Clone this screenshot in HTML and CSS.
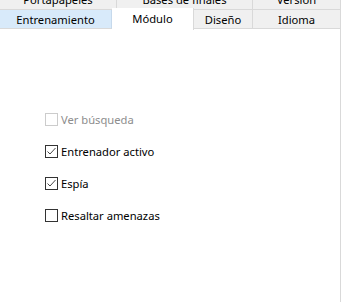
FILE: index.html
```html
<!DOCTYPE html>
<html lang="es">
<head>
  <meta charset="UTF-8">
  <title>Opciones</title>
  <link rel="stylesheet" href="styles.css">
</head>
<body>

  <div class="tab-row back-row">
    <div class="tab w-porta">Portapapeles</div>
    <div class="tab w-bases">Bases de finales</div>
    <div class="tab w-version">Versión</div>
  </div>

  <div class="tab-row front-row">
    <div class="tab w-entren hover">Entrenamiento</div>
    <div class="tab w-modulo selected">Módulo</div>
    <div class="tab w-diseno">Diseño</div>
    <div class="tab w-idioma">Idioma</div>
  </div>

  <div class="panel">
    <label class="option disabled">
      <span class="box"></span>
      <span>Ver búsqueda</span>
    </label>
    <label class="option">
      <span class="box">
        <svg width="11" height="11" viewBox="0 0 11 11"><path d="M1.5 5.5 L4 8 L9.5 2" fill="none" stroke="#333" stroke-width="0.9"/></svg>
      </span>
      <span>Entrenador activo</span>
    </label>
    <label class="option">
      <span class="box">
        <svg width="11" height="11" viewBox="0 0 11 11"><path d="M1.5 5.5 L4 8 L9.5 2" fill="none" stroke="#333" stroke-width="0.9"/></svg>
      </span>
      <span>Espía</span>
    </label>
    <label class="option">
      <span class="box"></span>
      <span>Resaltar amenazas</span>
    </label>
  </div>

</body>
</html>
```

FILE: styles.css
```css
body {
  margin: 0;
  background: #fff;
  font-family: "Noto Sans", sans-serif;
  font-size: 11.2px;
  color: #000;
  overflow: hidden;
}
.tab-row {
  display: flex;
  width: 341px;
}
.back-row {
  margin-top: -10px;
  height: 20px;
}
.front-row {
  height: 19px;
  position: relative;
}
.tab {
  box-sizing: border-box;
  background: #f0f0f0;
  border-right: 1px solid #d9d9d9;
  border-bottom: 1px solid #d9d9d9;
  text-align: center;
  line-height: 19px;
}
.back-row .tab {
  line-height: 19px;
}
.w-porta { width: 117px; }
.w-bases { width: 136px; }
.w-version { width: 88px; }
.w-entren { width: 112px; }
.w-modulo { width: 82px; }
.w-diseno { width: 59px; }
.w-idioma { width: 88px; }
.tab.hover {
  background: #d8eafa;
  border-right-color: #c6d9ec;
}
.tab.selected {
  background: #fff;
  border-bottom: none;
  margin-top: -2px;
  height: 22px;
  line-height: 21px;
  position: relative;
  z-index: 1;
}
.panel {
  box-sizing: border-box;
  width: 341px;
  height: 280px;
  border-right: 1px solid #d9d9d9;
  padding: 84px 0 0 45px;
}
.option {
  display: flex;
  align-items: center;
  gap: 3px;
  height: 13px;
  margin-bottom: 19px;
}
.box {
  box-sizing: border-box;
  width: 13px;
  height: 13px;
  border: 1px solid #333;
  background: #fff;
  display: flex;
  align-items: center;
  justify-content: center;
}
.disabled {
  color: #8d8d8d;
}
.disabled .box {
  border-color: #cccccc;
}
```
